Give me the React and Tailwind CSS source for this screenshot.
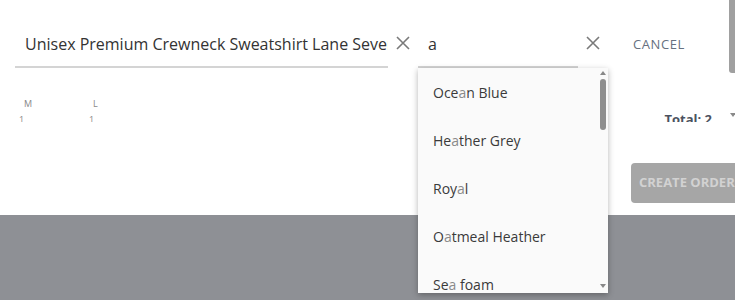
import React from "react";

const colors = ["Ocean Blue", "Heather Grey", "Royal", "Oatmeal Heather", "Sea foam"];

// highlight the matched "a" like the autocomplete does
function Highlight({ text, query }) {
  const i = text.toLowerCase().indexOf(query);
  if (i < 0) return <span>{text}</span>;
  return (
    <span className="whitespace-pre">
      {text.slice(0, i)}
      <span className="text-[#8a8a8a]">{text.slice(i, i + query.length)}</span>
      {text.slice(i + query.length)}
    </span>
  );
}

function CloseIcon() {
  return (
    <svg width="14" height="14" viewBox="0 0 14 14" className="shrink-0">
      <path d="M1 1L13 13M13 1L1 13" stroke="#7a7a7a" strokeWidth="1.6" />
    </svg>
  );
}

export default function App() {
  return (
    <div className="w-[735px] h-[300px] overflow-hidden bg-[#8e9095] font-['Open_Sans',sans-serif]">
      <div className="relative h-[215px] bg-white">
        <div className="h-[122px] overflow-hidden">
          {/* product + colour search row */}
          <div className="flex items-start pt-[26px]">
            <div className="ml-[15px] w-[373px] h-[42px] border-b-2 border-[#d4d4d4] pl-[10px] pt-[6px] text-[16px] text-[#333] whitespace-nowrap overflow-hidden">
              Unisex Premium Crewneck Sweatshirt Lane Seven
            </div>
            <div className="ml-[8px] mt-[10px]">
              <CloseIcon />
            </div>
            <div className="ml-[8px] w-[160px] h-[42px] border-b-2 border-[#d4d4d4] pl-[10px] pt-[6px] text-[16px] text-[#333]">
              a
            </div>
            <div className="ml-[8px] mt-[10px]">
              <CloseIcon />
            </div>
            <div className="ml-[33px] mt-[9px] text-[13px] text-[#667080] tracking-[0.6px]">
              CANCEL
            </div>
          </div>

          {/* sizes + total */}
          <div className="flex items-start mt-[30px]">
            <div className="flex gap-[50px] pl-[19px] text-[9px] text-[#888]">
              <div className="flex flex-col w-[20px]">
                <span className="pl-[5px] leading-[12px]">M</span>
                <span className="leading-[12px] mt-[4px]">1</span>
              </div>
              <div className="flex flex-col w-[20px]">
                <span className="pl-[4px] leading-[12px]">L</span>
                <span className="leading-[12px] mt-[4px]">1</span>
              </div>
            </div>
            <div className="ml-auto mr-[23px] mt-[12px] text-[13px] font-bold text-[#4b5260]">
              Total: 2
            </div>
          </div>
        </div>

        {/* page scrollbar */}
        <div className="absolute right-0 top-0 w-[6px] h-[122px]">
          <div className="w-[6px] h-[73px] rounded-bl-[3px] bg-[#a0a0a0]" />
          <div className="absolute left-[1px] top-[113px] w-0 h-0 border-l-[3px] border-r-[3px] border-t-[4px] border-l-transparent border-r-transparent border-t-[#8a8a8a]" />
        </div>

        <div className="flex pt-[41px] pl-[631px]">
          <button className="shrink-0 w-[130px] h-[40px] rounded-[4px] bg-[#a6a6a6] pl-[8px] text-left text-[13px] font-bold text-[#d2d2d2] whitespace-nowrap">
            CREATE ORDER
          </button>
        </div>

        {/* autocomplete dropdown */}
        <div className="absolute left-[418px] top-[68px] w-[190px] h-[225px] bg-[#fafafa] shadow-[0_2px_6px_rgba(0,0,0,0.3)] overflow-hidden">
          <div className="flex flex-col">
            {colors.map((c) => (
              <div key={c} className="h-[48px] flex items-center pl-[15px] text-[14px] text-[#3a3a3a]">
                <Highlight text={c} query="a" />
              </div>
            ))}
          </div>
          <div className="absolute right-[2px] top-0 w-[6px] h-[225px]">
            <div className="absolute left-0 top-[3px] w-0 h-0 border-l-[3px] border-r-[3px] border-b-[4px] border-l-transparent border-r-transparent border-b-[#888]" />
            <div className="absolute left-0 top-[11px] w-[6px] h-[51px] rounded-[3px] bg-[#8f8f8f]" />
            <div className="absolute left-0 top-[216px] w-0 h-0 border-l-[3px] border-r-[3px] border-t-[4px] border-l-transparent border-r-transparent border-t-[#888]" />
          </div>
        </div>
      </div>
    </div>
  );
}
